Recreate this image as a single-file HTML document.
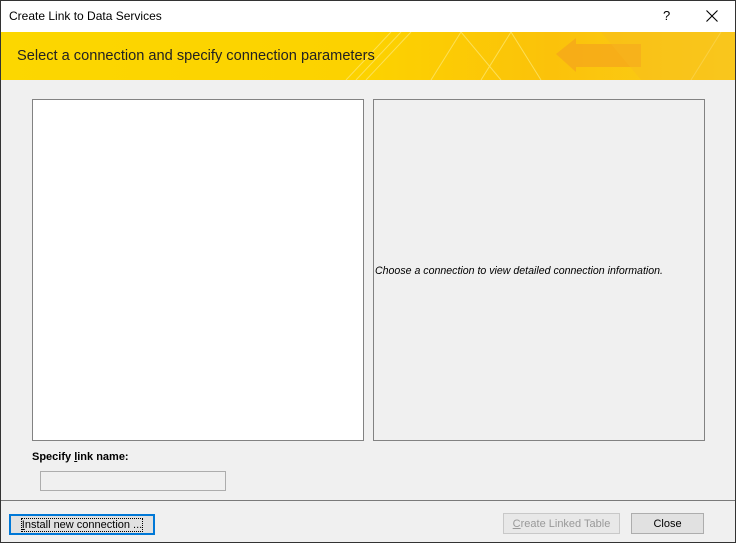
<!DOCTYPE html><html><head><style>
*{margin:0;padding:0;box-sizing:border-box}
body{width:736px;height:543px;overflow:hidden;background:#f0f0f0;font-family:"Liberation Sans",sans-serif;font-size:11px;position:relative}
.win{position:absolute;left:0;top:0;width:736px;height:543px;border:1px solid #333}
.abs{position:absolute}
.btn{position:absolute;height:21px;background:#e1e1e1;border:1px solid #adadad;text-align:center;line-height:19px;font-size:11px}
</style></head><body>
<div class="win"></div>
<div class="abs" style="left:1px;top:1px;width:734px;height:31px;background:#fff"></div>
<div class="abs" style="left:9px;top:9px;font-size:12px">Create Link to Data Services</div>
<div class="abs" style="left:663px;top:8px;font-size:13px">?</div>
<svg class="abs" style="left:706px;top:10px" width="12" height="12"><path d="M0.5 0.5L11.5 11.5M11.5 0.5L0.5 11.5" stroke="#000" stroke-width="1.1"/></svg>
<div class="abs" style="left:1px;top:32px;width:734px;height:48px;background:linear-gradient(90deg,#fcd700 0%,#fcd200 50%,#fbc20a 75%,#fad01a 100%);overflow:hidden">
<svg width="734" height="48" style="position:absolute;left:0;top:0">
<g stroke="#fde56a" stroke-width="1" fill="none" opacity="0.8">
<path d="M345 48 L390 0 M355 48 L400 0 M365 48 L410 0 M430 48 L460 0 L500 48 M480 48 L510 0 L540 48 M690 48 L720 0"/>
</g>
<path d="M555 22 L575 6 L575 12 L640 12 L640 35 L575 35 L575 40 Z" fill="#f6a81a" opacity="0.8"/>
<path d="M600 0 L640 48 L734 48 L734 0 Z" fill="#f8b820" opacity="0.4"/>
</svg>
<div class="abs" style="left:16px;top:16px;font-size:14.6px;color:#222">Select a connection and specify connection parameters</div>
</div>
<div class="abs" style="left:32px;top:99px;width:332px;height:342px;background:#fff;border:1px solid #828282"></div>
<div class="abs" style="left:373px;top:99px;width:332px;height:342px;background:#f0f0f0;border:1px solid #828282"></div>
<div class="abs" style="left:375px;top:265px;font-style:italic;font-size:10.6px">Choose a connection to view detailed connection information.</div>
<div class="abs" style="left:32px;top:451px;font-weight:bold;font-size:11px">Specify <u>l</u>ink name:</div>
<div class="abs" style="left:40px;top:471px;width:186px;height:20px;border:1px solid #adadad;background:#f0f0f0"></div>
<div class="abs" style="left:1px;top:500px;width:734px;height:1px;background:#7a7a7a"></div>
<div class="btn" style="left:9px;top:514px;width:146px;border:2px solid #0078d7;line-height:18px"><span style="outline:1px dotted #000"><u>I</u>nstall new connection ...</span></div>
<div class="btn" style="left:503px;top:513px;width:117px;color:#999;background:#e8e8e8;border-color:#c8c8c8;line-height:20px"><u>C</u>reate Linked Table</div>
<div class="btn" style="left:631px;top:513px;width:73px;line-height:20px">Close</div>
</body></html>
